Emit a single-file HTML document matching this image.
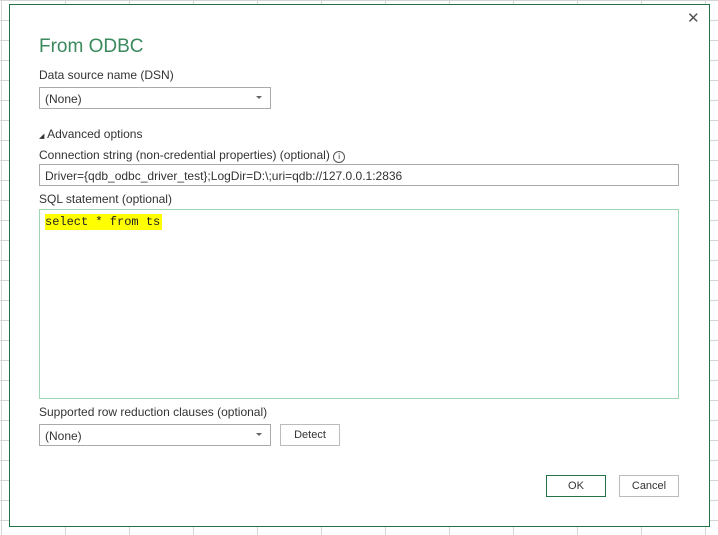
<!DOCTYPE html>
<html><head><style>
body{margin:0;width:718px;height:535px;overflow:hidden;position:relative;font-family:"Liberation Sans",sans-serif;font-size:12px;color:#333;
background-color:#fff;
background-image:linear-gradient(to right,#d4d4d4 1px,transparent 1px),linear-gradient(to bottom,#d4d4d4 1px,transparent 1px);
background-size:64px 20px;background-position:1px 0,0 0;}
.dlg{position:absolute;left:9px;top:4px;width:699px;height:521px;background:#fff;border:1px solid #217346;}
.a{position:absolute;}
.box{position:absolute;border:1px solid #aaa;background:#fff;box-sizing:border-box;}
.arrow{position:absolute;right:8px;top:8px;width:0;height:0;border-left:3px solid transparent;border-right:3px solid transparent;border-top:3px solid #666;}
.btn{position:absolute;box-sizing:border-box;border:1px solid #bbb;background:#fff;text-align:center;font-size:11px;}
</style></head><body>
<div class="dlg">
<div class="a" style="left:677px;top:4px;font-size:15px;color:#555">✕</div>
<div class="a" style="left:29px;top:31px;font-size:19px;color:#3a8a5e">From ODBC</div>
<div class="a" style="left:29px;top:63px">Data source name (DSN)</div>
<div class="box" style="left:29px;top:82px;width:232px;height:22px"><span class="a" style="left:5px;top:4px">(None)</span><div class="arrow"></div></div>
<div class="a" style="left:29px;top:122px"><span style="font-size:7px">◢</span> Advanced options</div>
<div class="a" style="left:29px;top:143px">Connection string (non-credential properties) (optional) <span style="display:inline-block;width:10px;height:10px;border:1px solid #555;border-radius:50%;font-size:8px;line-height:10px;text-align:center;vertical-align:0px">i</span></div>
<div class="box" style="left:29px;top:159px;width:640px;height:22px"><span class="a" style="left:5px;top:4px">Driver={qdb_odbc_driver_test};LogDir=D:\;uri=qdb://127.0.0.1:2836</span></div>
<div class="a" style="left:29px;top:187px">SQL statement (optional)</div>
<div class="box" style="left:29px;top:204px;width:640px;height:190px;border-color:#9fd6b5"><span class="a" style="left:5px;top:4px;background:#ffff00;font-family:'Liberation Mono',monospace;font-size:12px;padding:1px 2px 1px 0;color:#222">select * from ts </span></div>
<div class="a" style="left:29px;top:400px">Supported row reduction clauses (optional)</div>
<div class="box" style="left:29px;top:419px;width:232px;height:22px"><span class="a" style="left:5px;top:4px">(None)</span><div class="arrow"></div></div>
<div class="btn" style="left:270px;top:419px;width:60px;height:22px;line-height:20px">Detect</div>
<div class="btn" style="left:536px;top:470px;width:60px;height:22px;line-height:20px;border-color:#217346">OK</div>
<div class="btn" style="left:609px;top:470px;width:60px;height:22px;line-height:20px">Cancel</div>
</div>
</body></html>
